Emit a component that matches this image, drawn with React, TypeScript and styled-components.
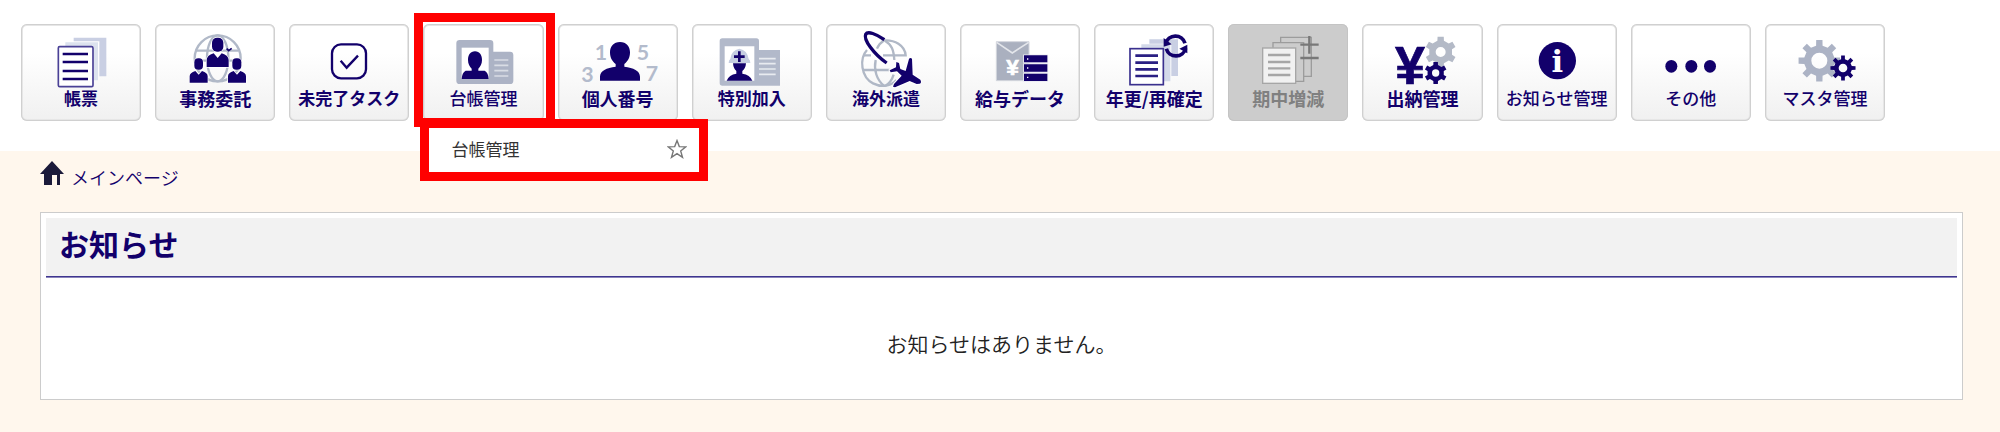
import React from 'react';
import styled, { createGlobalStyle, css } from 'styled-components';

const NAVY = '#12006b';
const STEEL = '#acb3c5';
const PALE = '#c9cfe3';

const GlobalStyle = createGlobalStyle`
  *, *::before, *::after { box-sizing: border-box; }
  body {
    margin: 0;
    background: #fff7ed;
    color: #333;
    font-family: "Noto Sans CJK JP", "Noto Sans", sans-serif;
  }
`;

const Header = styled.header`
  background: #fff;
  padding: 24px 115px 30px 21px;
`;

const MenuList = styled.ul`
  display: grid;
  grid-template-columns: repeat(14, minmax(0, 1fr));
  gap: 14px;
  margin: 0;
  padding: 0;
  list-style: none;
`;

const MenuItem = styled.li<{ $open?: boolean }>`
  position: relative;

  ${({ $open }) =>
    $open &&
    css`
      z-index: 1;

      &::after {
        content: '';
        position: absolute;
        inset: -11px -11px -6px -9px;
        border: 9px solid #f00;
        pointer-events: none;
      }
    `}
`;

const MenuButton = styled.button`
  display: flex;
  flex-direction: column;
  align-items: center;
  width: 100%;
  height: 97px;
  padding: 0;
  border: 0;
  border-radius: 6px;
  background: linear-gradient(#fff 30%, #f0f0f0);
  box-shadow: inset 0 0 0 1px #d0d0d0, inset 0 0 0 2px #e6e6e6;
  color: ${NAVY};
  font-family: inherit;
  cursor: pointer;

  &:disabled {
    background: #ccc;
    box-shadow: inset 0 0 0 1px #c4c4c4;
    color: #808080;
    cursor: default;
  }
`;

const MenuIcon = styled.svg`
  flex: none;
  width: 120px;
  height: 64px;
  overflow: visible;
`;

const MenuLabel = styled.span<{ $size: number; $weight: number }>`
  font-size: ${({ $size }) => $size}px;
  font-weight: ${({ $weight }) => $weight};
  line-height: 20px;
  white-space: nowrap;
`;

const Submenu = styled.div`
  position: absolute;
  z-index: 2;
  top: 95px;
  left: -3px;
  display: flex;
  align-items: center;
  justify-content: space-between;
  width: 288px;
  height: 62px;
  padding: 0 12px 2px 22px;
  border: 9px solid #f00;
  background: #fff;
`;

const SubmenuLink = styled.a`
  color: #333;
  font-size: 17px;
  line-height: 24px;
  text-decoration: none;
`;

const StarButton = styled.button`
  display: flex;
  padding: 0;
  border: 0;
  background: none;
  cursor: pointer;
`;

const Main = styled.main`
  padding: 10px 37px 33px 40px;
`;

const Breadcrumb = styled.a`
  display: inline-flex;
  align-items: center;
  gap: 7px;
  height: 32px;
  color: ${NAVY};
  font-size: 18px;
  font-weight: 350;
  line-height: 32px;
  text-decoration: none;
`;

const HomeIcon = styled.svg`
  flex: none;
  width: 24px;
  height: 24px;
  margin-bottom: 8px;
`;

const Panel = styled.section`
  margin-top: 19px;
  padding: 5px;
  border: 1px solid #ccc;
  background: #fff;
`;

const PanelTitle = styled.h2`
  margin: 0;
  padding: 5px 13px 13px;
  border-bottom: 1px solid #3f3590;
  background: #f2f2f2;
  box-shadow: 0 1px 0 #8a85bb;
  color: ${NAVY};
  font-size: 30px;
  font-weight: 700;
  line-height: 40px;
`;

const PanelMessage = styled.p`
  margin: 0;
  padding: 50px 0 35px;
  color: #222;
  font-size: 21px;
  font-weight: 350;
  line-height: 32px;
  text-align: center;
`;

interface GearProps {
  cx: number;
  cy: number;
  outer: number;
  inner: number;
  hole: number;
  teeth: number;
  fill: string;
}

function Gear({ cx, cy, outer, inner, hole, teeth, fill }: GearProps) {
  const step = (Math.PI * 2) / teeth;
  const root = step * 0.27;
  const tip = step * 0.19;
  const points: string[] = [];
  const add = (radius: number, angle: number) =>
    points.push(`${(cx + radius * Math.sin(angle)).toFixed(1)} ${(cy - radius * Math.cos(angle)).toFixed(1)}`);
  for (let i = 0; i < teeth; i += 1) {
    const a = i * step;
    add(inner, a - root);
    add(outer, a - tip);
    add(outer, a + tip);
    add(inner, a + root);
  }
  return (
    <path
      fill={fill}
      fillRule="evenodd"
      d={`M${points.join('L')}ZM${cx - hole} ${cy}a${hole} ${hole} 0 1 0 ${hole * 2} 0a${hole} ${hole} 0 1 0 ${-hole * 2} 0Z`}
    />
  );
}

function RuledLines({ x1, x2, ys, color, width }: { x1: number; x2: number; ys: number[]; color: string; width: number }) {
  return <path d={ys.map((y) => `M${x1} ${y}H${x2}`).join('')} stroke={color} strokeWidth={width} />;
}

const ReportIcon = (
  <>
    <path d="M222 113H320V229H299V124H222Z" fill={PALE} />
    <path d="M197 127H295V241H282V138H197Z" fill="#dce2ee" />
    <rect x="176" y="140" width="104" height="120" rx="4" fill="#fff" stroke="#4a4196" strokeWidth="5" />
    <RuledLines x1={189} x2={265} ys={[162, 186, 213, 237]} color={NAVY} width={8} />
  </>
);

const OutsourcingIcon = (
  <>
    <g fill="none" stroke="#b1b9c8" strokeWidth="7">
      <circle cx="655" cy="175" r="69" />
      <ellipse cx="655" cy="175" rx="32" ry="69" />
      <path d="M592 152H718M586 182H724" />
    </g>
    <path d="M682 146L688 152L697 145" fill="none" stroke={NAVY} strokeWidth="5" />
    <g fill={NAVY} stroke="#fff" strokeWidth="4" paintOrder="stroke">
      <path d="M571 248V229Q571 218 588 213L598 224L608 213Q625 218 625 229V248Z" />
      <rect x="585" y="175" width="26" height="34" rx="12" />
      <path d="M686 248V229Q686 218 703 213L713 224L723 213Q740 218 740 229V248Z" />
      <rect x="699" y="175" width="27" height="34" rx="12" />
      <path d="M622 201V180Q622 167 643 160L655 174L667 160Q688 167 688 180V201Z" />
      <rect x="638" y="113" width="34" height="42" rx="15" />
    </g>
  </>
);

const TaskIcon = (
  <g fill="none" stroke={NAVY} strokeWidth="7">
    <rect x="156" y="133" width="102" height="102" rx="27" />
    <path d="M182 182L200 203L234 167" />
  </g>
);

const LedgerIcon = (
  <>
    <path d="M541 120H632Q642 120 642 130V155H692Q702 155 702 165V242Q702 252 692 252H541Q531 252 531 242V130Q531 120 541 120Z" fill={STEEL} />
    <path d="M547 143H628V237H547Z" fill="#fff" />
    <RuledLines x1={645} x2={687} ys={[180, 196, 212, 228]} color="#d9dde5" width={5} />
    <path d="M587 154C601 154 608 165 608 180C608 191 603 201 597 206V212H616Q627 218 628 237H547Q548 218 559 212H577V206C571 201 566 191 566 180C566 165 573 154 587 154Z" fill={NAVY} />
  </>
);

const PersonalNumberIcon = (
  <>
    <g fill="#b3bbcc" fontFamily="Lato" fontWeight="700" fontSize="64" textAnchor="middle">
      <text x="150" y="180">1</text>
      <text x="276" y="181">5</text>
      <text x="109" y="247">3</text>
      <text x="303" y="244">7</text>
    </g>
    <path d="M207 126C226 126 237 139 237 157C237 173 230 185 220 192V200C247 203 267 212 267 230V242H147V230C147 212 167 203 194 200V192C184 185 177 173 177 157C177 139 188 126 207 126Z" fill={NAVY} />
  </>
);

const SpecialIcon = (
  <>
    <path d="M517 115H619Q627 115 627 123V150H690V257H517Q509 257 509 249V123Q509 115 517 115Z" fill="#b2b9ca" />
    <path d="M524 139H613V242H524Z" fill="#fff" />
    <RuledLines x1={627} x2={677} ys={[176, 191, 207, 223]} color="#e8ebf0" width={5} />
    <path d="M536 189Q536 180 541 177Q544 150 568 146Q592 150 596 177Q601 180 601 189Z" fill="#c5cde1" />
    <path d="M549 190H588Q587 205 577 213V221Q600 224 607 242H530Q537 224 559 221V213Q550 205 549 190Z" fill={NAVY} />
    <path d="M568 154V186M552 170H584" stroke={NAVY} strokeWidth="8" />
  </>
);

const OverseasIcon = (
  <>
    <g fill="none" stroke="#b0b8c6" strokeWidth="7">
      <path d="M182 122C222 116 252 138 254 166H186M138 150C114 176 120 232 156 250C184 264 210 258 226 240" />
      <path d="M188 122C178 128 172 136 168 146M164 180C158 208 166 240 190 258M192 122C212 134 218 150 220 180M218 224C213 240 204 252 192 258M126 166H150M128 210H206" />
    </g>
    <path d="M190 119C166 102 140 92 134 103C127 119 158 162 197 189" fill="none" stroke={NAVY} strokeWidth="10" />
    <path
      d="M226 186L234 189L238 207L254 213L264 177Q267 172 273 176L275 224L298 239Q303 248 296 251L287 252L266 243L222 262L216 260L219 252L242 227L228 214L209 217L206 211L225 202Z"
      fill={NAVY}
      stroke="#fff"
      strokeWidth="6"
      paintOrder="stroke"
    />
  </>
);

const PayrollIcon = (
  <>
    <path d="M529 125H627V242H529Z" fill="#aab0bf" stroke="#d3d6dd" strokeWidth="3" />
    <path d="M530 127L577 159L626 127" fill="none" stroke="#e4e6eb" strokeWidth="5" />
    <text x="578" y="224" fill="#fff" stroke="#fff" strokeWidth="2" fontFamily="Liberation Sans" fontWeight="700" fontSize="68" textAnchor="middle">¥</text>
    <path d="M612 166H682V187H612ZM612 193H682V215H612ZM612 221H682V243H612Z" fill={NAVY} stroke="#e9e9f2" strokeWidth="5" paintOrder="stroke" />
    <path d="M621 177H625M621 204H625M621 232H625" stroke="#fff" strokeWidth="4" />
  </>
);

const RenewalIcon = (
  <>
    <path d="M207 118H293V228H273V131H207Z" fill={PALE} />
    <path d="M183 133H270V244H251V145H183Z" fill="#d3d9e9" />
    <rect x="149" y="146" width="100" height="108" fill="#fff" stroke="#3a308e" strokeWidth="5" />
    <RuledLines x1={165} x2={233} ys={[167, 188, 208, 228]} color="#2a1f83" width={8} />
    <path d="M256 131A30 30 0 0 1 314 130M316 145A30 30 0 0 1 258 146" fill="none" stroke={NAVY} strokeWidth="11" />
    <path d="M250 114L250 140L274 133ZM321 160L321 134L297 146Z" fill={NAVY} />
  </>
);

const MidtermIcon = (
  <>
    <path d="M603 128V112H695V229H672M580 143V128H672V244H648" fill="none" stroke="#9c9c9c" strokeWidth="4" />
    <rect x="549" y="144" width="99" height="106" fill="#f1f1f1" stroke="#a6a6a6" strokeWidth="4" />
    <RuledLines x1={565} x2={632} ys={[165, 186, 205, 225]} color="#a6a6a6" width={7} />
    <path d="M662 134H717M689 108V161M662 174H717" stroke="#787878" strokeWidth="7" />
  </>
);

const CashIcon = (
  <>
    <text x="181" y="252" fill={NAVY} stroke={NAVY} strokeWidth="2" fontFamily="Liberation Sans" fontWeight="700" fontSize="162" textAnchor="middle">¥</text>
    <Gear cx={273} cy={156} outer={47} inner={35} hole={15} teeth={6} fill="#b4bac7" />
    <Gear cx={258} cy={219} outer={34} inner={25} hole={11} teeth={6} fill={NAVY} />
  </>
);

const NoticeIcon = (
  <>
    <circle cx="621" cy="182" r="56" fill={NAVY} />
    <text x="621" y="217" fill="#fff" fontFamily="DejaVu Serif" fontWeight="700" fontSize="92" textAnchor="middle">i</text>
  </>
);

const OtherIcon = (
  <g fill={NAVY}>
    <ellipse cx="153" cy="199" rx="18" ry="19" />
    <ellipse cx="213" cy="199" rx="18" ry="19" />
    <ellipse cx="269" cy="199" rx="18" ry="19" />
  </g>
);

const MasterIcon = (
  <>
    <Gear cx={597} cy={182} outer={63} inner={46} hole={24} teeth={8} fill={STEEL} />
    <Gear cx={668} cy={204} outer={38} inner={27} hole={13} teeth={8} fill={NAVY} />
  </>
);

interface Entry {
  label: string;
  icon: React.ReactNode;
  originX: number;
  size: number;
  weight: number;
  disabled?: boolean;
  open?: boolean;
}

const entries: Entry[] = [
  { label: '帳票', icon: ReportIcon, originX: 64, size: 17, weight: 700 },
  { label: '事務委託', icon: OutsourcingIcon, originX: 467, size: 18, weight: 700 },
  { label: '未完了タスク', icon: TaskIcon, originX: 27, size: 17, weight: 700 },
  { label: '台帳管理', icon: LedgerIcon, originX: 431, size: 17, weight: 500, open: true },
  { label: '個人番号', icon: PersonalNumberIcon, originX: 21, size: 18, weight: 700 },
  { label: '特別加入', icon: SpecialIcon, originX: 426, size: 17, weight: 700 },
  { label: '海外派遣', icon: OverseasIcon, originX: 15, size: 17, weight: 700 },
  { label: '給与データ', icon: PayrollIcon, originX: 420, size: 18, weight: 700 },
  { label: '年更/再確定', icon: RenewalIcon, originX: 41, size: 18, weight: 700 },
  { label: '期中増減', icon: MidtermIcon, originX: 445, size: 18, weight: 700, disabled: true },
  { label: '出納管理', icon: CashIcon, originX: 37, size: 18, weight: 700 },
  { label: 'お知らせ管理', icon: NoticeIcon, originX: 440, size: 17, weight: 500 },
  { label: 'その他', icon: OtherIcon, originX: 32, size: 17, weight: 500 },
  { label: 'マスタ管理', icon: MasterIcon, originX: 434, size: 17, weight: 500 },
];

export default function App() {
  return (
    <>
      <GlobalStyle />
      <Header>
        <nav aria-label="メインメニュー">
          <MenuList>
            {entries.map((entry) => (
              <MenuItem key={entry.label} $open={entry.open}>
                <MenuButton type="button" disabled={entry.disabled} aria-expanded={entry.open}>
                  <MenuIcon viewBox={`${entry.originX} 72 360 192`} aria-hidden="true">
                    {entry.icon}
                  </MenuIcon>
                  <MenuLabel $size={entry.size} $weight={entry.weight}>
                    {entry.label}
                  </MenuLabel>
                </MenuButton>
                {entry.open && (
                  <Submenu>
                    <SubmenuLink href="#ledger">台帳管理</SubmenuLink>
                    <StarButton type="button" aria-label="お気に入り">
                      <svg width="20" height="20" viewBox="0 0 20 20" aria-hidden="true">
                        <path
                          d="M10 1.6L12.3 7.6L18.8 7.9L13.7 11.9L15.5 18.3L10 14.6L4.5 18.3L6.3 11.9L1.2 7.9L7.7 7.6Z"
                          fill="none"
                          stroke="#777"
                          strokeWidth="1.4"
                        />
                      </svg>
                    </StarButton>
                  </Submenu>
                )}
              </MenuItem>
            ))}
          </MenuList>
        </nav>
      </Header>
      <Main>
        <Breadcrumb href="#main">
          <HomeIcon viewBox="0 0 24 24" aria-hidden="true">
            <path d="M12 0L24 13H20V24H17V14H12V24H4V13H0Z" fill="#1b1a3a" />
          </HomeIcon>
          メインページ
        </Breadcrumb>
        <Panel>
          <PanelTitle>お知らせ</PanelTitle>
          <PanelMessage>お知らせはありません。</PanelMessage>
        </Panel>
      </Main>
    </>
  );
}
